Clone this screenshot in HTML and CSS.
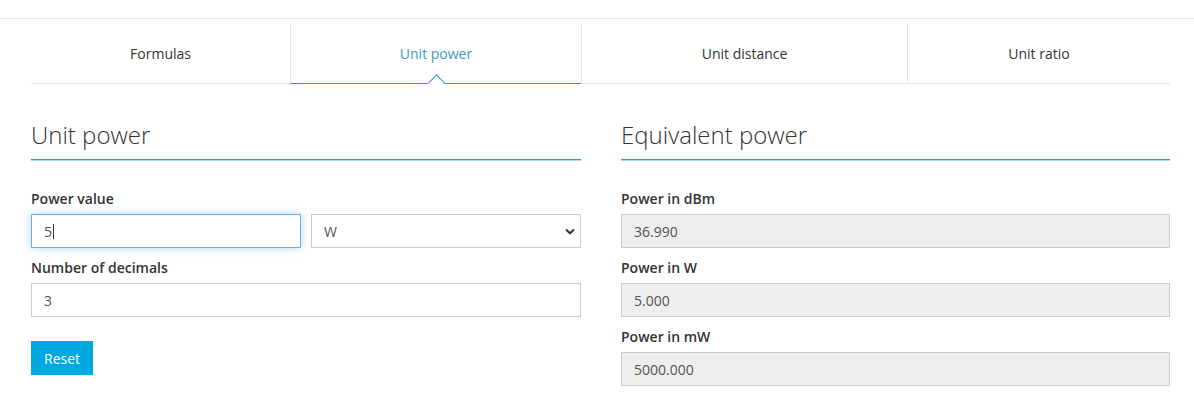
FILE: index.html
```html
<!DOCTYPE html>
<html lang="en">
<head>
    <meta charset="UTF-8">
    <meta name="viewport" content="width=device-width, initial-scale=1.0">
    <title>Unit power</title>
    <link rel="stylesheet" href="styles.css">
</head>
<body>

    <div class="topbar"></div>

    <div class="container">
        <!-- Tabs -->
        <ul class="tabs">
            <li class="tab tab-formulas">Formulas</li>
            <li class="tab tab-power active">Unit power</li>
            <li class="tab tab-distance">Unit distance</li>
            <li class="tab tab-ratio">Unit ratio</li>
        </ul>

        <div class="columns">
            <!-- Input side -->
            <div class="column">
                <h2>Unit power</h2>

                <div class="form-group">
                    <label>Power value</label>
                    <div class="input-row">
                        <div class="input-wrap">
                            <input type="text" class="form-control focused" value="5">
                            <span class="text-cursor"></span>
                        </div>
                        <div class="select-wrap">
                            <select class="form-control">
                                <option>W</option>
                                <option>mW</option>
                                <option>dBm</option>
                            </select>
                            <svg class="chevron" width="10" height="7" viewBox="0 0 10 7">
                                <path d="M1 1.5 L5 5.3 L9 1.5" fill="none" stroke="#333" stroke-width="2"/>
                            </svg>
                        </div>
                    </div>
                </div>

                <div class="form-group">
                    <label>Number of decimals</label>
                    <input type="text" class="form-control" value="3">
                </div>

                <button class="btn">Reset</button>
            </div>

            <!-- Result side -->
            <div class="column">
                <h2>Equivalent power</h2>

                <div class="form-group">
                    <label>Power in dBm</label>
                    <input type="text" class="form-control" value="36.990" readonly>
                </div>

                <div class="form-group">
                    <label>Power in W</label>
                    <input type="text" class="form-control" value="5.000" readonly>
                </div>

                <div class="form-group">
                    <label>Power in mW</label>
                    <input type="text" class="form-control" value="5000.000" readonly>
                </div>
            </div>
        </div>
    </div>

</body>
</html>
```

FILE: styles.css
```css
body {
    font-family: 'Open Sans', 'Noto Sans', sans-serif;
    font-size: 14px;
    line-height: 20px;
    color: #333;
    background-color: #fff;
    margin: 0;
    padding: 0;
}

.topbar {
    height: 18px;
    border-bottom: 1px solid #e7e7e7;
}

.container {
    width: 1139px;
    margin-left: 31px;
}

.tabs {
    display: flex;
    list-style: none;
    margin: 5px 0 0 0;
    padding: 0;
}

.tab {
    height: 59px;
    line-height: 59px;
    text-align: center;
    border-bottom: 1px solid #e3e3e3;
    border-left: 1px solid #e3e3e3;
    color: #333;
    cursor: pointer;
}

.tab-formulas { width: 259px; border-left: none; }
.tab-power { width: 290px; }
.tab-distance { width: 325px; }
.tab-ratio { width: 262px; }

.tab.active {
    position: relative;
    color: #3d9bc9;
    border-bottom-color: #2f9ac6;
}

.tab.active::after {
    content: "";
    position: absolute;
    left: 50%;
    bottom: -7px;
    width: 12px;
    height: 12px;
    margin-left: -6px;
    background-color: #fff;
    border-top: 1px solid #2f9ac6;
    border-left: 1px solid #2f9ac6;
    transform: rotate(45deg);
}

.columns {
    display: flex;
    gap: 40px;
}

.column {
    width: 550px;
}

h2 {
    font-size: 24px;
    font-weight: 300;
    line-height: 26px;
    margin: 38px 0 29px 0;
    padding-bottom: 11px;
    border-bottom: 1px solid #2f9ac6;
    box-shadow: 0 1px 0 rgba(47, 154, 198, 0.4);
    color: #333;
}

.form-group {
    margin-bottom: 10px;
}

label {
    display: block;
    font-weight: 600;
    margin-bottom: 5px;
}

.form-control {
    display: block;
    box-sizing: border-box;
    width: 100%;
    height: 34px;
    padding: 6px 12px;
    font-family: inherit;
    font-size: 14px;
    color: #555;
    background-color: #fff;
    border: 1px solid #ccc;
    border-radius: 0;
    outline: none;
}

.form-control[readonly] {
    background-color: #eee;
}

.form-control.focused {
    border-color: #66afe9;
    box-shadow: 0 0 8px rgba(102, 175, 233, 0.5);
}

.input-row {
    display: flex;
    gap: 10px;
}

.input-wrap {
    position: relative;
    width: 270px;
}

.text-cursor {
    position: absolute;
    left: 22px;
    top: 10px;
    width: 1px;
    height: 15px;
    background-color: #333;
}

.select-wrap {
    position: relative;
    width: 270px;
}

.select-wrap select {
    appearance: none;
    -webkit-appearance: none;
    color: #555;
}

.chevron {
    position: absolute;
    right: 6px;
    top: 14px;
    pointer-events: none;
}

.btn {
    margin-top: 14px;
    width: 62px;
    height: 34px;
    padding: 6px 0;
    font-family: inherit;
    font-size: 14px;
    color: #fff;
    background-color: #00a8e0;
    border: none;
    border-radius: 0;
    cursor: pointer;
}
```
